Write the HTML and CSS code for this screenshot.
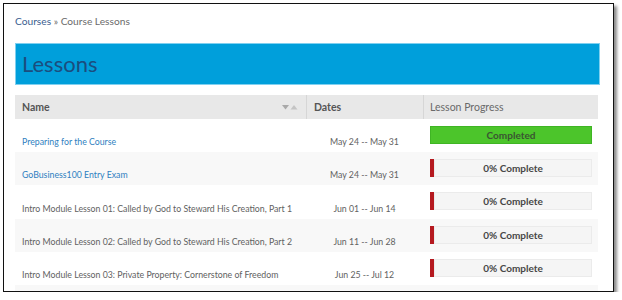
FILE: index.html
```html
<!DOCTYPE html>
<html lang="en">
<head>
    <meta charset="UTF-8">
    <meta name="viewport" content="width=device-width, initial-scale=1.0">
    <title>Course Lessons</title>
    <link rel="stylesheet" href="styles.css">
</head>
<body>
    <div class="frame">
        <div class="crumbs"><a href="#">Courses</a> » Course Lessons</div>

        <h1 class="banner">Lessons</h1>

        <div class="lessons">
            <div class="head name-head">
                <span>Name</span>
                <svg class="sort" width="16" height="5" viewBox="0 0 16 5">
                    <polygon points="0,0 7,0 3.5,4.5" fill="#a9a9a9"/>
                    <polygon points="8.5,4.5 15.5,4.5 12,0" fill="#c4c4c4"/>
                </svg>
            </div>
            <div class="head dates-head">Dates</div>
            <div class="head progress-head">Lesson Progress</div>

            <div class="row">
                <div class="cell name"><a href="#">Preparing for the Course</a></div>
                <div class="cell dates">May 24 -- May 31</div>
                <div class="cell progress"><div class="bar done">Completed</div></div>
            </div>
            <div class="row">
                <div class="cell name"><a href="#">GoBusiness100 Entry Exam</a></div>
                <div class="cell dates">May 24 -- May 31</div>
                <div class="cell progress"><div class="bar"><i></i><span>0% Complete</span></div></div>
            </div>
            <div class="row">
                <div class="cell name">Intro Module Lesson 01: Called by God to Steward His Creation, Part 1</div>
                <div class="cell dates">Jun 01 -- Jun 14</div>
                <div class="cell progress"><div class="bar"><i></i><span>0% Complete</span></div></div>
            </div>
            <div class="row">
                <div class="cell name">Intro Module Lesson 02: Called by God to Steward His Creation, Part 2</div>
                <div class="cell dates">Jun 11 -- Jun 28</div>
                <div class="cell progress"><div class="bar"><i></i><span>0% Complete</span></div></div>
            </div>
            <div class="row">
                <div class="cell name">Intro Module Lesson 03: Private Property: Cornerstone of Freedom</div>
                <div class="cell dates">Jun 25 -- Jul 12</div>
                <div class="cell progress"><div class="bar"><i></i><span>0% Complete</span></div></div>
            </div>
            <div class="row">
                <div class="cell name"></div>
                <div class="cell dates"></div>
                <div class="cell progress"></div>
            </div>
        </div>
    </div>
</body>
</html>
```

FILE: styles.css
```css
body { margin: 0; background: #fff; font-family: Lato, "Open Sans", sans-serif; }

.frame {
    margin: 3px 0 0 3px;
    width: 585px;
    height: 277px;
    padding: 10px 13px 0 11px;
    border: 1px solid #111;
    box-shadow: 3px 3px 3px rgba(0, 0, 0, 0.45);
    overflow: hidden;
    background: #fff;
}

.crumbs { font-size: 10.2px; line-height: 14px; color: #6b6b6b; }
.crumbs a { color: #3a5d8f; text-decoration: none; }

.banner {
    margin: 15px 0 0;
    height: 40px;
    line-height: 40px;
    padding-left: 6px;
    border: 1px solid #7fd0f0;
    background: #009fdb;
    color: #1b4d7e;
    font-size: 22px;
    font-weight: normal;
}

.lessons {
    margin-top: 10px;
    display: grid;
    grid-template-columns: 291px 117px 175px;
    font-size: 8.75px;
}

.head {
    height: 24px;
    line-height: 24px;
    background: #e8e8e8;
    color: #555;
    font-size: 10.5px;
    border-left: 1px solid #d6d6d6;
}
.name-head { border-left: none; padding: 0 8px 0 7px; font-weight: bold; display: flex; justify-content: space-between; align-items: center; }
.dates-head { padding-left: 7px; font-weight: bold; }
.progress-head { padding-left: 6px; color: #6a6a6a; }
.sort { display: block; }

.row { display: contents; }
.cell { height: 33.2px; box-sizing: border-box; white-space: nowrap; }
.row:nth-child(odd) .cell { background: #f8f8f8; }

.name, .dates { display: flex; align-items: flex-end; padding-bottom: 5px; color: #616161; }
.name { padding-left: 7px; }
.name a { color: #2f7fc1; text-decoration: none; }
.dates { justify-content: center; }

.progress { padding: 7px 6px 0 7px; }

.bar {
    display: flex;
    height: 18px;
    font-size: 10px;
    font-weight: bold;
    color: #474747;
}
.bar i { width: 4px; background: #b5191f; }
.bar span {
    flex: 1;
    text-align: center;
    line-height: 16px;
    background: #f5f5f5;
    border: 1px solid #ebebeb;
}
.bar.done {
    justify-content: center;
    line-height: 16px;
    background: #4cc52b;
    border: 1px solid #3fb524;
    color: #3a5532;
    box-sizing: border-box;
}
```
